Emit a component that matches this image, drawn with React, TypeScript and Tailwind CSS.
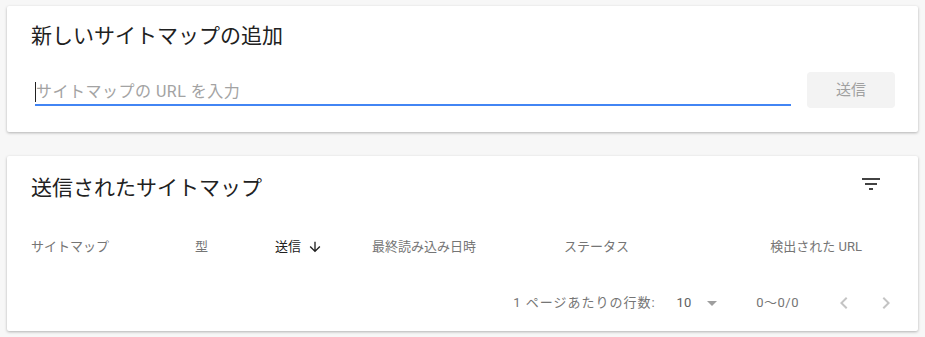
const font = { fontFamily: '"Roboto", "Noto Sans CJK JP", sans-serif' };

function FilterIcon() {
  return (
    <svg width="24" height="24" viewBox="0 0 24 24" className="fill-[#424242]">
      <path d="M10 18h4v-2h-4v2zM3 6v2h18V6H3zm3 7h12v-2H6v2z" />
    </svg>
  );
}

function ArrowDown() {
  return (
    <svg width="16" height="16" viewBox="0 0 24 24" className="fill-[#212121]">
      <path d="M20 12l-1.41-1.41L13 16.17V4h-2v12.17l-5.58-5.6L4 12l8 8 8-8z" />
    </svg>
  );
}

function DropIcon() {
  return (
    <svg width="24" height="24" viewBox="0 0 24 24" className="fill-[#9e9e9e]">
      <path d="M7 10l5 5 5-5z" />
    </svg>
  );
}

function Chevron({ dir }: { dir: "left" | "right" }) {
  return (
    <svg width="24" height="24" viewBox="0 0 24 24" className="fill-[#c4c4c4]">
      {dir === "left" ? (
        <path d="M15.41 7.41L14 6l-6 6 6 6 1.41-1.41L10.83 12z" />
      ) : (
        <path d="M10 6L8.59 7.41 13.17 12l-4.58 4.59L10 18l6-6z" />
      )}
    </svg>
  );
}

const columns = [
  { key: "sitemap", label: "サイトマップ", w: "w-[164px]" },
  { key: "type", label: "型", w: "w-[80px]" },
  { key: "sent", label: "送信", w: "w-[97px]", active: true },
  { key: "read", label: "最終読み込み日時", w: "w-[192px]" },
  { key: "status", label: "ステータス", w: "flex-1" },
];

export default function App() {
  return (
    <div className="min-h-[337px] w-[925px] bg-[#f7f7f7] px-[7px] pt-[6px]" style={font}>
      {/* add sitemap */}
      <div className="rounded-[2px] bg-white pt-4 pb-6 pl-6 pr-[23px] shadow-[0_1px_3px_rgba(0,0,0,0.28)]">
        <div className="h-[28px] text-[21px] leading-[28px] text-[#212121]">新しいサイトマップの追加</div>
        <div className="mt-[22px] flex items-end gap-4">
          <div className="mb-[2px] ml-[4px] flex h-[26px] flex-1 items-center border-b-2 border-[#4285f4]">
            <span className="h-[20px] w-px bg-[#212121]" />
            <span className="text-[16px] leading-[20px] tracking-[0.5px] text-[#a3a3a3]">サイトマップの URL を入力</span>
          </div>
          <button className="h-9 w-[88px] rounded-[4px] bg-[#f3f3f3] text-[15px] text-[#a0a0a0]">送信</button>
        </div>
      </div>

      {/* submitted sitemaps */}
      <div className="mt-6 rounded-[2px] bg-white pb-4 shadow-[0_1px_3px_rgba(0,0,0,0.28)]">
        <div className="flex items-start justify-between pt-[18px] pl-6 pr-[35px]">
          <div className="text-[21px] leading-[28px] text-[#212121]">送信されたサイトマップ</div>
          <div className="-mt-[2px]">
            <FilterIcon />
          </div>
        </div>

        <div className="mt-[35px] flex h-5 items-center pl-6 pr-[56px] text-[13px] leading-5 text-[#757575]">
          {columns.map((c) => (
            <div key={c.key} className={`${c.w} flex items-center ${c.active ? "text-[#212121]" : ""}`}>
              {c.label}
              {c.active ? (
                <span className="ml-[6px]">
                  <ArrowDown />
                </span>
              ) : null}
            </div>
          ))}
          <div className="text-right">検出された URL</div>
        </div>

        <div className="mt-[34px] flex h-6 items-center justify-end pr-5 text-[13px] text-[#757575]">
          <span className="tracking-[1px]">1 ページあたりの行数:</span>
          <span className="ml-[21px] text-[#616161]">10</span>
          <span className="ml-[9px]">
            <DropIcon />
          </span>
          <span className="ml-[32px] tracking-[0.5px]">0〜0/0</span>
          <span className="ml-[33px]">
            <Chevron dir="left" />
          </span>
          <span className="ml-[18px]">
            <Chevron dir="right" />
          </span>
        </div>
      </div>
    </div>
  );
}
